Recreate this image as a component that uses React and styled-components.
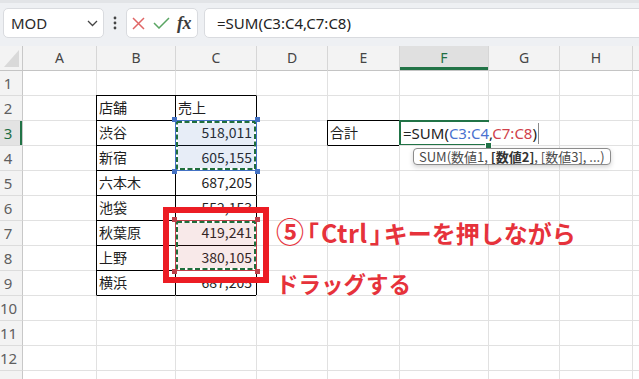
import React from 'react';
import styled, { createGlobalStyle } from 'styled-components';

const Global = createGlobalStyle`
  html, body { margin: 0; padding: 0; background: #fff; overflow: hidden; }
  #root { width: 639px; height: 379px; }
`;

const Page = styled.div`
  position: relative;
  width: 639px;
  height: 379px;
  overflow: hidden;
  font-family: "Noto Sans", sans-serif;
  background: #fff;
`;

/* ---------- formula bar ---------- */
const TopBar = styled.div`
  box-sizing: border-box;
  height: 46px;
  background: #eef0f3;
  border-top: 3px solid #e2e4e7;
  padding: 5px 0 0 3px;
  display: flex;
  align-items: flex-start;
`;

const Field = styled.div`
  box-sizing: border-box;
  height: 30px;
  background: #fff;
  border: 1px solid #d9dbdf;
  border-radius: 5px;
  display: flex;
  align-items: center;
`;

const NameBox = styled(Field)`
  width: 101px;
  padding: 0 5px 0 7px;
  justify-content: space-between;
  font-size: 15px;
  color: #2a2a2a;
`;

const Grip = styled.div`
  width: 22px;
  height: 30px;
  display: flex;
  align-items: center;
  justify-content: center;
`;

const IconBox = styled(Field)`
  width: 72px;
  padding: 0 4px 0 5px;
  justify-content: space-between;
`;

const Fx = styled.span`
  font-family: "Liberation Serif", serif;
  font-style: italic;
  font-weight: 700;
  font-size: 18px;
  color: #3c3c3c;
  letter-spacing: -0.5px;
  margin-right: 2px;
`;

const FormulaInput = styled(Field)`
  flex: 1;
  margin-left: 6px;
  margin-right: -12px;
  padding-left: 12px;
  font-size: 15px;
  color: #222;
`;

/* ---------- sheet ---------- */
const Sheet = styled.div`
  display: grid;
  grid-template-columns: 23px 73px 79px 81px 71px 72px 89px 71px 73px 7px;
  grid-template-rows: 24px;
  grid-auto-rows: 25px;
`;

const Corner = styled.div`
  box-sizing: border-box;
  background: #f3f3f3;
  border-right: 1px solid #c8c8c8;
  display: flex;
  align-items: flex-end;
  justify-content: flex-end;
  padding: 0 3px 3px 0;
`;

const CornerMark = styled.div`
  width: 15px;
  height: 17px;
  background: #d9d9d9;
  clip-path: polygon(100% 0, 100% 100%, 0 100%);
`;

const ColHeader = styled.div`
  box-sizing: border-box;
  border-left: ${p => (p.$first ? 'none' : '1px solid #d6d6d6')};
  background: ${p => (p.$active ? '#e0e0e0' : '#f3f3f3')};
  color: ${p => (p.$active ? '#1f6e43' : '#454545')};
  box-shadow: ${p => (p.$active ? 'inset 0 -3px 0 #217346' : 'none')};
  font-size: 14px;
  line-height: 24px;
  text-align: center;
  overflow: hidden;
`;

const RowHeader = styled.div`
  box-sizing: border-box;
  border-top: 1px solid ${p => (p.$first ? '#c4c4c4' : '#dcdcdc')};
  border-right: 1px solid #c8c8c8;
  background: ${p => (p.$active ? '#e3e3e3' : '#f3f3f3')};
  color: ${p => (p.$active ? '#1f6e43' : '#5f5f5f')};
  box-shadow: ${p => (p.$active ? 'inset -2px 0 0 #217346' : 'none')};
  font-size: 15px;
  line-height: 24px;
  text-align: center;
  padding-right: 6px;
  white-space: nowrap;
`;

const Cell = styled.div`
  box-sizing: border-box;
  border-top: 1px solid ${p => (p.$bt ? '#000' : p.$first ? '#c4c4c4' : '#e1e1e1')};
  border-left: ${p => (p.$noLeft ? 'none' : `1px solid ${p.$bl ? '#000' : '#e1e1e1'}`)};
  padding: ${p => (p.$num ? '0 4px 0 2px' : '0 2px 0 2px')};
  text-align: ${p => (p.$num ? 'right' : 'left')};
  font-family: "Noto Sans CJK JP", sans-serif;
  font-size: 14px;
  line-height: 23px;
  color: #1e1e1e;
  white-space: nowrap;
  overflow: hidden;
`;

/* ---------- overlays ---------- */
const Range = styled.div`
  position: absolute;
  left: ${p => p.$x}px;
  top: ${p => p.$y}px;
  width: ${p => p.$w}px;
  height: ${p => p.$h}px;
  box-sizing: border-box;
  border: 1px solid ${p => p.$color};
  background: ${p => p.$tint};
`;

const Ants = styled.svg`
  position: absolute;
  left: 0;
  top: 0;
  width: 100%;
  height: 100%;
  overflow: visible;
`;

const Handle = styled.div`
  position: absolute;
  width: 5px;
  height: 5px;
  background: ${p => p.$color};
  ${p => (p.$right ? 'right: -4px;' : 'left: -4px;')}
  ${p => (p.$bottom ? 'bottom: -4px;' : 'top: -4px;')}
`;

const RedFrame = styled.div`
  position: absolute;
  left: 163px;
  top: 207px;
  width: 106px;
  height: 76px;
  box-sizing: border-box;
  border: 6px solid #ec1c24;
`;

const ActiveCell = styled.div`
  position: absolute;
  left: 399px;
  top: 120px;
  width: 90px;
  height: 25px;
  box-sizing: border-box;
  border: 2px solid #217346;
  border-right: none;
  white-space: nowrap;
`;

const EditText = styled.span`
  display: inline-block;
  background: #fff;
  padding: 0 1px 0 2px;
  font-size: 15px;
  line-height: 21px;
  color: #222;
  border-right: 1px solid #8a8a8a;
`;

const Ref = styled.span`
  color: ${p => p.$color};
`;

const FillHandle = styled.div`
  position: absolute;
  left: 485px;
  top: 142px;
  width: 5px;
  height: 5px;
  background: #217346;
  border: 1px solid #fff;
`;

const Tip = styled.div`
  position: absolute;
  left: 413px;
  top: 148px;
  height: 17px;
  box-sizing: border-box;
  padding: 0 5px 0 5px;
  background: #fff;
  border: 1px solid #8c8c8c;
  border-radius: 4px;
  box-shadow: 0 2px 5px rgba(0, 0, 0, 0.18);
  font-family: "Noto Sans CJK JP", sans-serif;
  font-size: 13px;
  line-height: 15px;
  color: #4a4a4a;
  white-space: nowrap;
`;

const TipStrong = styled.b`
  font-weight: 700;
  color: #333;
`;

const Note = styled.div`
  position: absolute;
  left: 276px;
  top: 206px;
  font-family: "Noto Sans CJK JP", sans-serif;
  font-weight: 700;
  color: #e6323b;
  white-space: nowrap;
`;

const NoteLine = styled.div`
  font-size: ${p => (p.$small ? '22.5px' : '24px')};
  line-height: 50px;
  font-weight: ${p => (p.$light ? 600 : 700)};
`;

const Circled = styled.span`
  font-size: 28px;
  margin-right: 1px;
`;

const Bracket = styled.span`
  font-feature-settings: "halt";
  margin: 0 2px;
`;

const Key = styled.span`
  font-size: 25px;
  letter-spacing: 0.5px;
`;

/* ---------- data ---------- */
const COLS = ['A', 'B', 'C', 'D', 'E', 'F', 'G', 'H', 'I'];
const DATA = {
  2: { B: '店舗', C: '売上' },
  3: { B: '渋谷', C: '518,011', E: '合計' },
  4: { B: '新宿', C: '605,155' },
  5: { B: '六本木', C: '687,205' },
  6: { B: '池袋', C: '552,153' },
  7: { B: '秋葉原', C: '419,241' },
  8: { B: '上野', C: '380,105' },
  9: { B: '横浜', C: '687,205' },
};

const blackTop = (r, c) =>
  ((c === 'B' || c === 'C') && r >= 2 && r <= 10) || (c === 'E' && (r === 3 || r === 4));
const blackLeft = (r, c) =>
  ((c === 'B' || c === 'C' || c === 'D') && r >= 2 && r <= 9) ||
  ((c === 'E' || c === 'F') && r === 3);

function Selection({ x, y, w, h, color, tint }) {
  const iw = w - 2;
  const ih = h - 2;
  return (
    <Range $x={x} $y={y} $w={w} $h={h} $color={color} $tint={tint}>
      <Ants viewBox={`0 0 ${iw} ${ih}`}>
        <rect x="1" y="1" width={iw - 2} height={ih - 2} fill="none" stroke="#fff" strokeWidth="2" />
        <rect x="1" y="1" width={iw - 2} height={ih - 2} fill="none" stroke="#1f6e3c" strokeWidth="2" strokeDasharray="5 2.5" />
      </Ants>
      <Handle $color={color} />
      <Handle $color={color} $right />
      <Handle $color={color} $bottom />
      <Handle $color={color} $right $bottom />
    </Range>
  );
}

export default function App() {
  const rows = Array.from({ length: 13 }, (_, i) => i + 1);
  return (
    <Page>
      <Global />
      <TopBar>
        <NameBox>
          <span>MOD</span>
          <svg width="11" height="7" viewBox="0 0 11 7">
            <polyline points="1,1 5.5,5.5 10,1" fill="none" stroke="#444" strokeWidth="1.3" />
          </svg>
        </NameBox>
        <Grip>
          <svg width="4" height="14" viewBox="0 0 4 14">
            <circle cx="2" cy="2" r="1.4" fill="#444" />
            <circle cx="2" cy="7" r="1.4" fill="#444" />
            <circle cx="2" cy="12" r="1.4" fill="#444" />
          </svg>
        </Grip>
        <IconBox>
          <svg width="13" height="13" viewBox="0 0 13 13">
            <path d="M1 1 L12 12 M12 1 L1 12" stroke="#e06666" strokeWidth="1.5" fill="none" />
          </svg>
          <svg width="17" height="12" viewBox="0 0 17 12">
            <polyline points="1,6 6,11 16,1" stroke="#5aa563" strokeWidth="1.5" fill="none" />
          </svg>
          <Fx>fx</Fx>
        </IconBox>
        <FormulaInput>=SUM(C3:C4,C7:C8)</FormulaInput>
      </TopBar>

      <Sheet>
        <Corner>
          <CornerMark />
        </Corner>
        {COLS.map((c, i) => (
          <ColHeader key={c} $first={i === 0} $active={c === 'F'}>
            {c === 'I' ? '' : c}
          </ColHeader>
        ))}
        {rows.map(r => (
          <React.Fragment key={r}>
            <RowHeader $first={r === 1} $active={r === 3}>
              {r}
            </RowHeader>
            {COLS.map((c, i) => {
              const v = DATA[r] && DATA[r][c];
              const num = c === 'C' && r >= 3;
              return (
                <Cell
                  key={c}
                  $first={r === 1}
                  $noLeft={i === 0}
                  $bt={blackTop(r, c)}
                  $bl={blackLeft(r, c)}
                  $num={num}
                >
                  {v || ''}
                </Cell>
              );
            })}
          </React.Fragment>
        ))}
      </Sheet>

      <Selection x={175} y={120} w={82} h={51} color="#4472c4" tint="rgba(68,114,196,0.13)" />
      <Selection x={175} y={220} w={82} h={51} color="#c0404a" tint="rgba(200,70,70,0.12)" />
      <RedFrame />

      <ActiveCell>
        <EditText>
          =SUM(<Ref $color="#4a72cf">C3:C4</Ref>,<Ref $color="#d0414b">C7:C8</Ref>)
        </EditText>
      </ActiveCell>
      <FillHandle />
      <Tip>
        SUM(数値1, <TipStrong>[数値2]</TipStrong>, [数値3], ...)
      </Tip>

      <Note>
        <NoteLine>
          <Circled>⑤</Circled>
          <Bracket>「</Bracket>
          <Key>Ctrl</Key>
          <Bracket>」</Bracket>キーを押しながら
        </NoteLine>
        <NoteLine $small $light>ドラッグする</NoteLine>
      </Note>
    </Page>
  );
}
